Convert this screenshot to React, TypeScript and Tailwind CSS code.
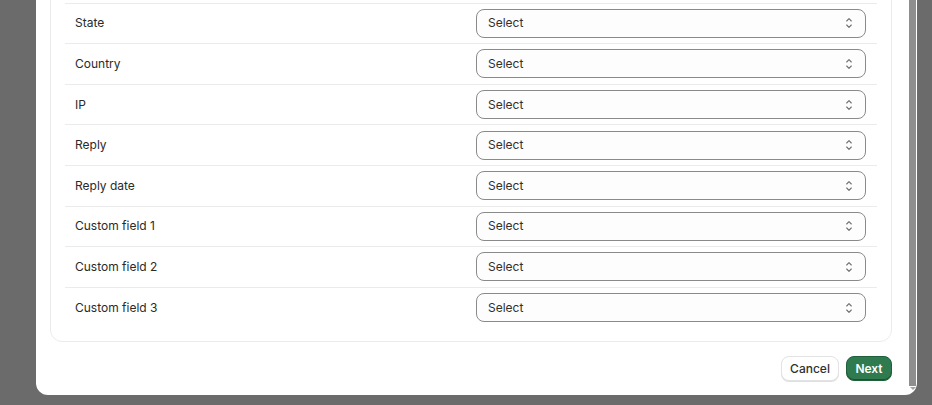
const rows = [
  'City',
  'State',
  'Country',
  'IP',
  'Reply',
  'Reply date',
  'Custom field 1',
  'Custom field 2',
  'Custom field 3',
];

function SelectIcon() {
  return (
    <svg width="12" height="14" viewBox="0 0 12 14" fill="none" stroke="#6e6e6e" strokeWidth="1.1" strokeLinecap="round" strokeLinejoin="round">
      <path d="M3.7 5 6 2.7 8.3 5" />
      <path d="M3.7 9 6 11.3 8.3 9" />
    </svg>
  );
}

function FieldRow({ label, first }: { label: string; first: boolean }) {
  return (
    <div
      className={`grid h-[40.6px] grid-cols-[1fr_390px] items-center pl-[10px] pr-[11px] ${
        first ? '' : 'border-t border-[#ebebeb]'
      }`}
    >
      <span className="text-[12px] text-[#2a2a2a]">{label}</span>
      <div className="flex h-[29px] items-center justify-between rounded-[8px] border border-[#8a8a8a] bg-[#fdfdfd] pl-[11px] pr-[10px]">
        <span className="text-[12px] text-[#303030]">Select</span>
        <SelectIcon />
      </div>
    </div>
  );
}

export default function App() {
  return (
    <div
      className="h-[405px] w-[932px] overflow-hidden bg-[#6b6b6b] pl-[36px]"
      style={{ fontFamily: 'Inter, "Noto Sans", sans-serif' }}
    >
      <div className="flex h-[395px] w-[881px] overflow-hidden rounded-b-[12px] bg-white">
        <div className="flex w-[873px] flex-col overflow-hidden pl-[14px] pr-[17px]">
          <div className="-mt-[53px] rounded-[12px] border border-[#ebebeb] px-[14px] pb-[14px] pt-[14px]">
            {rows.map((label, i) => (
              <FieldRow key={label} label={label} first={i === 0} />
            ))}
          </div>
          <div className="flex justify-end gap-[7px] pb-[15px] pt-[14px]">
            <button className="h-[25px] w-[58px] rounded-[8px] border border-[#e3e3e3] bg-white text-[12px] font-medium text-[#303030] shadow-[0_1px_0_#e0e0e0]">
              Cancel
            </button>
            <button className="h-[25px] w-[46px] rounded-[8px] border border-[#1f5f3a] bg-[#2f7a4f] text-[12px] font-semibold text-white shadow-[inset_0_-1px_0_#1b5233]">
              Next
            </button>
          </div>
        </div>
        <div className="flex w-[7px] flex-col">
          <div className="h-[386px] bg-[#8e8e8e]" />
          <div className="flex justify-center pt-[1px]">
            <div className="h-0 w-0 border-l-[3px] border-r-[3px] border-t-[3px] border-l-transparent border-r-transparent border-t-[#a3a3a3]" />
          </div>
        </div>
      </div>
    </div>
  );
}
